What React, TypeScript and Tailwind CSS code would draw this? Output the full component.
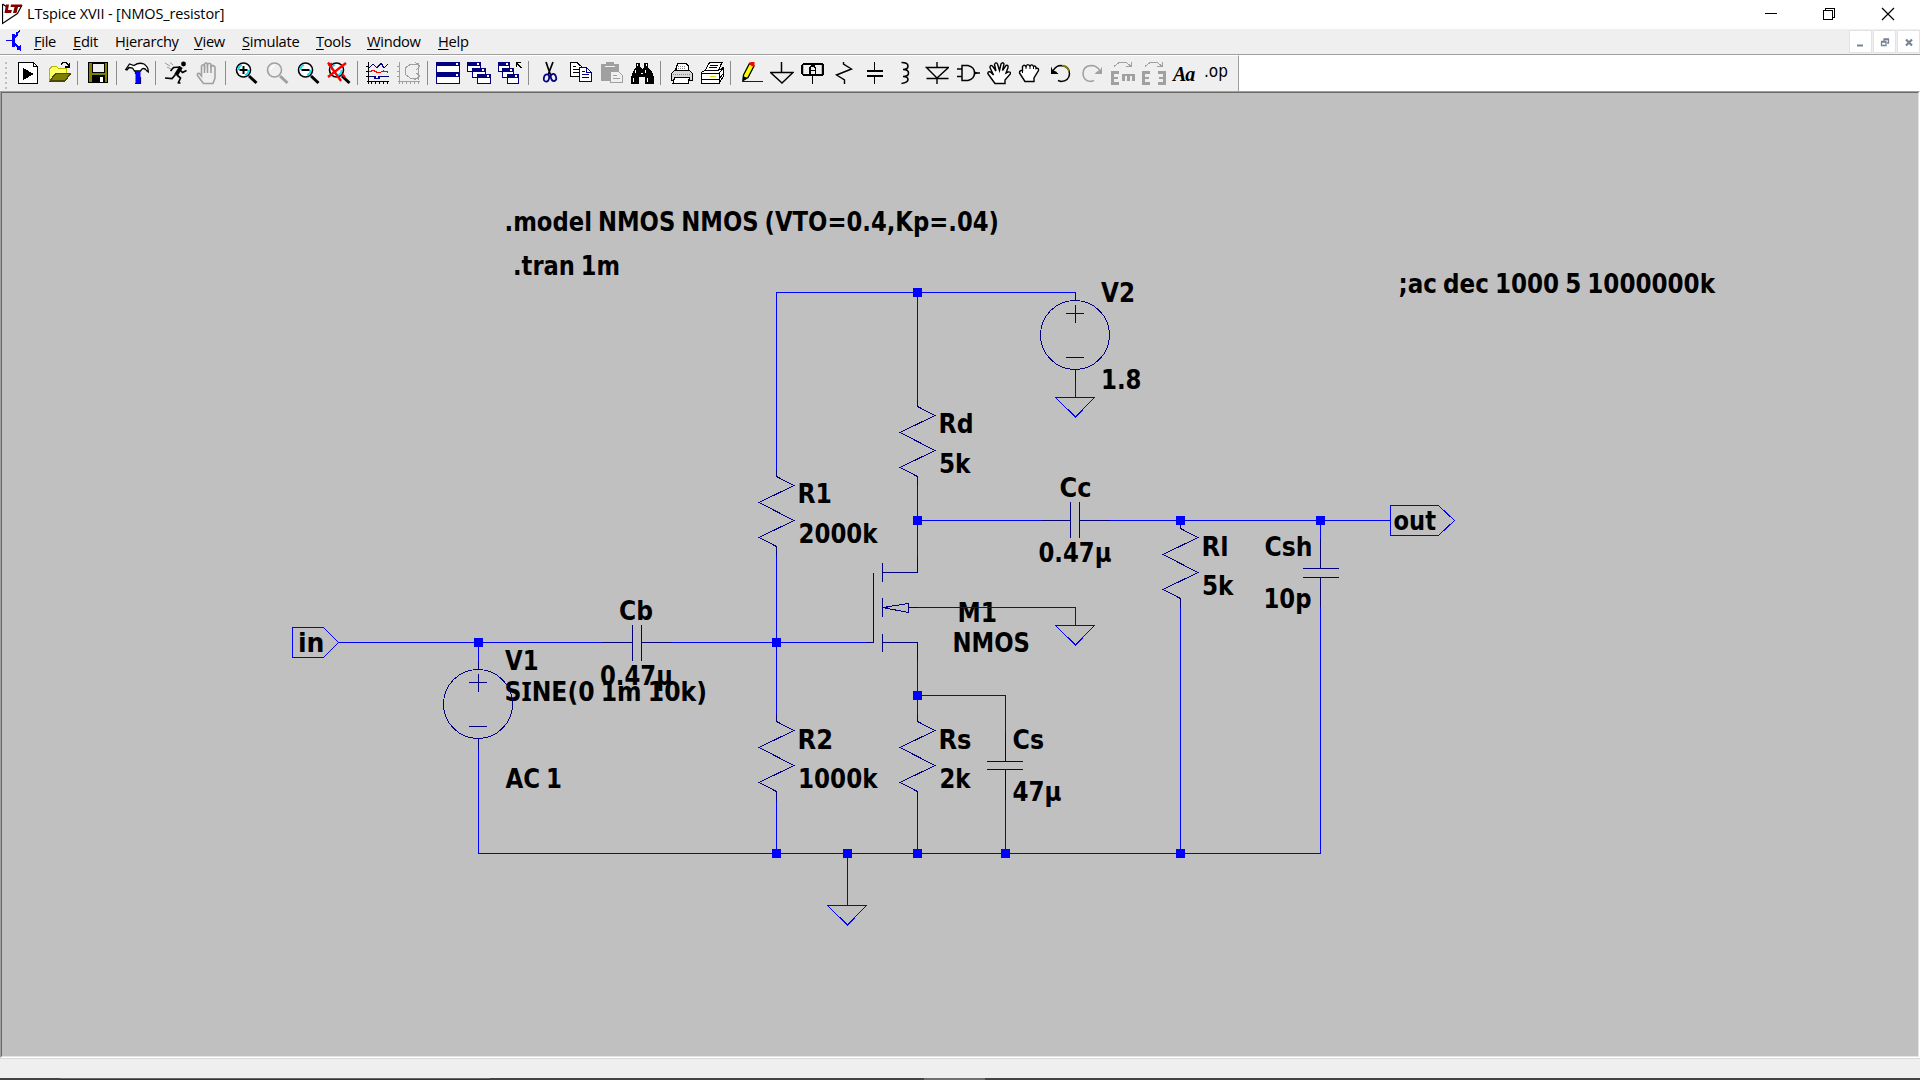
import React from "react";

const NAVY = "#000080";
const BLUE = "#0000ff";

type IconProps = { children: React.ReactNode; smooth?: boolean };

function Icon({ children, smooth }: IconProps) {
  return (
    <svg
      className="w-6 h-6 shrink-0"
      viewBox="0 0 24 24"
      fill="none"
      stroke="#000"
      strokeWidth={1.3}
      shapeRendering={smooth ? "auto" : "crispEdges"}
    >
      {children}
    </svg>
  );
}

function Lens({ gray, children }: { gray?: boolean; children?: React.ReactNode }) {
  const c = gray ? "#a0a0a0" : "#000";
  return (
    <Icon smooth>
      <circle cx="9.5" cy="9" r="7" fill={gray ? "none" : "#fff"} stroke={c} strokeWidth="1.6" />
      {gray ? (
        <path d="M6 9Q6 5.500 9.500 5" stroke="#fff" />
      ) : (
        <path d="M4.500 9Q4.500 5 8 4M14.500 9Q14.500 13 11 14" stroke="#00e5ff" strokeWidth="1.8" />
      )}
      <path d="M15 15L22.500 22" stroke={c} strokeWidth="3" />
      {children}
    </Icon>
  );
}

const MiniWindow = ({ x, y, w = 13, h = 9 }: { x: number; y: number; w?: number; h?: number }) => (
  <g>
    <rect x={x + 0.5} y={y + 0.5} width={w} height={h} fill="#fff" stroke={NAVY} strokeWidth="1" />
    <rect x={x} y={y} width={w + 1} height="4" fill={NAVY} stroke="none" />
    <rect x={x + w - 3} y={y + 1} width="2" height="2" fill="#fff" stroke="none" />
  </g>
);

const icons: Record<string, React.ReactNode> = {
  play: (
    <Icon>
      <path d="M2.500 1.500H17.500L21.500 5.500V22.500H2.500Z" fill="#fff" />
      <path d="M17.500 1.500V5.500H21.500" />
      <path d="M7 7L18 13L7 19Z" fill="#000" stroke="none" />
    </Icon>
  ),
  open: (
    <Icon>
      <path d="M2.500 20V8L5 5.500H9.500L11.500 7.500H19.500V12" fill="#ffff66" stroke="#b8b800" />
      <path d="M3 20L8.500 12.500H23.500L18 20Z" fill="#808000" stroke="#4a4a00" />
      <path d="M14 3.500L16 1.500H19L22.500 5.500M22.500 1.500V6H18" />
    </Icon>
  ),
  save: (
    <Icon>
      <rect x="2.500" y="1.500" width="19" height="20" fill="#808000" />
      <rect x="6" y="2" width="12" height="9" fill="#efefef" stroke="#000" strokeWidth="1" />
      <rect x="6" y="14" width="13" height="7" fill="#000" stroke="none" />
      <rect x="14" y="16" width="3" height="5" fill="#fff" stroke="none" />
    </Icon>
  ),
  hammer: (
    <Icon smooth>
      <path d="M.7 8.500L4.500 3L9 4.500Q14 1 19 3Q23.500 6 23.300 11L21.500 9.500Q19.500 6.500 17 8L15.500 10H9.500L7.500 7L4 6.500L2 9Z" fill="#fff" />
      <path d="M13 10V22.500" stroke={BLUE} strokeWidth="5" />
      <path d="M10.500 10V13M15.500 16V22.500M10 22.500H16" stroke={NAVY} strokeWidth="1.200" />
    </Icon>
  ),
  run: (
    <Icon smooth>
      <circle cx="19.500" cy="3" r="2.400" fill="#000" stroke="none" />
      <path d="M17 6L12 14" strokeWidth="4" />
      <path d="M16.500 6L9.500 6.500L6.500 10M16 9L18.500 11.500L22.500 9.500M13 14L16.500 17L14 22.500M11.500 13.500L8 17.500L1 17M14 22H16.500" strokeWidth="1.700" />
      <path d="M1 2L6 5M3 6L7 8M6 1.500L9 4" stroke="#999" strokeWidth="1" />
    </Icon>
  ),
  halt: (
    <Icon smooth>
      <path d="M8.500 22.500L2.500 14.500Q1.500 12 4.500 12.500L6.500 15V5Q8 2.500 9.500 5V3Q11 .5 12.500 3V3.500Q14.500 1 16 3.500V5.500Q18 3.500 20 6V17L18 22.500Z" fill="#efefef" stroke="#a0a0a0" strokeWidth="1.600" />
      <path d="M9.500 5V12M12.500 3V12M16 4V12" stroke="#a0a0a0" strokeWidth="1.600" />
    </Icon>
  ),
  zoomIn: (
    <Lens>
      <path d="M5.500 9H13.500M9.500 5V13" strokeWidth="2" />
    </Lens>
  ),
  zoomPan: <Lens gray />,
  zoomOut: (
    <Lens>
      <path d="M5.500 9H13.500" strokeWidth="2" />
    </Lens>
  ),
  zoomFit: (
    <Lens>
      <path d="M1 1.500L14 20M19 2L1 16M1 4L5 2.500M15 13L18 16" stroke="#ff0000" strokeWidth="2.300" />
    </Lens>
  ),
  plot: (
    <Icon>
      <path d="M2.500 1V23M1 20.500H23M5.500 20V23M9.500 20V23M13.500 20V23M17.500 20V23M21.500 20V23M0 5.500H3M0 10.500H3M0 15.500H3" />
      <path d="M3 7L7 3L11 7L15 2L18 7L22 3" stroke={NAVY} />
      <path d="M3 11L7 9.500L13 12L17 10L22 11" stroke="#ff0000" />
      <path d="M3 15.500H9V17.500H13V15.500H23" stroke={NAVY} />
    </Icon>
  ),
  smith: (
    <Icon>
      <path d="M2.500 1V23M1 20.500H23M5.500 20V23M9.500 20V23M13.500 20V23M17.500 20V23M21.500 20V23M0 5.500H3M0 10.500H3M0 15.500H3" stroke="#a0a0a0" />
      <path d="M20 3H14L8 7V13L13 17H21M18 1L23 5L19 9M19 12L23 15L17 19M21.500 2V19" stroke="#a0a0a0" strokeWidth="1" />
    </Icon>
  ),
  tile: (
    <Icon>
      <MiniWindow x={0} y={1} w={23} h={10} />
      <MiniWindow x={0} y={12} w={23} h={10} />
    </Icon>
  ),
  cascade: (
    <Icon>
      <MiniWindow x={0} y={1} />
      <MiniWindow x={5} y={7} />
      <MiniWindow x={10} y={13} />
    </Icon>
  ),
  closeAll: (
    <Icon>
      <MiniWindow x={0} y={1} w={11} />
      <MiniWindow x={4} y={7} w={11} />
      <MiniWindow x={9} y={13} w={11} />
      <path d="M18.500 6V1.500H23M18.500 1.500L23 7" strokeWidth="1.600" />
    </Icon>
  ),
  cut: (
    <Icon smooth>
      <path d="M9 1L13.500 14M16 1L11 14" strokeWidth="1.700" />
      <ellipse cx="9.500" cy="17" rx="2.600" ry="3.600" stroke={NAVY} strokeWidth="1.700" transform="rotate(15 9.500 17)" />
      <ellipse cx="16.500" cy="16.500" rx="2.600" ry="3.600" stroke={NAVY} strokeWidth="1.700" transform="rotate(-20 16.500 16.500)" />
    </Icon>
  ),
  copy: (
    <Icon>
      <path d="M2.500 1.500H9L13.500 5.500V15.500H2.500Z" fill="#fff" />
      <path d="M5 5.500H8M5 8.500H11M5 11.500H11" strokeWidth="1" />
      <path d="M11.500 6.500H18.500L23.500 11.500V20.500H11.500Z" fill="#fff" stroke={NAVY} />
      <path d="M14 10.500H17M14 13.500H21M14 16.500H21M18.500 7V11.500H23" stroke={NAVY} strokeWidth="1" />
    </Icon>
  ),
  paste: (
    <Icon>
      <rect x="2" y="3" width="18" height="17" rx="1" fill="#a0a0a0" stroke="none" />
      <rect x="7" y="1" width="8" height="3" fill="#a0a0a0" stroke="none" />
      <path d="M6 5.500H16" stroke="#efefef" strokeWidth="1" />
      <path d="M11.500 10.500H19.500L23.500 14.500V21.500H11.500Z" fill="#efefef" stroke="#a0a0a0" />
      <path d="M14 14.500H18M14 17.500H21" stroke="#a0a0a0" strokeWidth="1" />
    </Icon>
  ),
  find: (
    <Icon>
      <path d="M6 2H10V6L12 8L14 6V2H18V6L22 11L24 16V23H15V16H9V23H1V16L3 11L6 6Z" fill="#000" stroke="none" />
      <path d="M7.500 3V5M16.500 3V5M5.500 9V12M15.500 9V12M3.500 17V21M17.500 17V21M11 12.500H13" stroke="#fff" strokeWidth="1.300" />
    </Icon>
  ),
  print: (
    <Icon>
      <path d="M6.500 10L8.500 2.500H17L19.500 5.500V10" fill="#fff" />
      <path d="M2.500 12.500L5.500 9.500H20.500L23.500 12.500V19.500H2.500Z" fill="#d8d8d8" />
      <path d="M5.500 16.500H20.500L19 22.500H4Z" fill="#fff" />
      <path d="M9 5.500H16M9 7.500H17M4 13.500H22" stroke="#888" strokeWidth="1" strokeDasharray="1 1" />
    </Icon>
  ),
  printSetup: (
    <Icon>
      <path d="M5 10L9.500 1.500H22L18 10" fill="#fff" strokeWidth="1" />
      <path d="M1.500 11.500L5 9.500H18L23.500 6.500V15L19 22.500H1.500Z" fill="#fff" strokeWidth="1" />
      <path d="M1.500 12.500H19V22M19 12L23.500 7M1.500 18.500H19L23.500 12M10 4.500H18M9 6.500H17" strokeWidth="1" />
      <path d="M10 15.500H16" stroke="#e0d800" strokeWidth="1.500" />
    </Icon>
  ),
  pencil: (
    <Icon smooth>
      <path d="M4.500 14L10.500 2.500L15 5L9 16.500L4 19.500Z" fill="#ffff00" />
      <path d="M10 3L11.500 1H15.500V5L14.500 6Z" fill="#ff0000" stroke="none" />
      <path d="M4 15L8.500 17L3.500 20Z" fill="#000" stroke="none" />
      <path d="M3 20.500H24" stroke={BLUE} strokeWidth="1" shapeRendering="crispEdges" />
    </Icon>
  ),
  ground: (
    <Icon smooth>
      <path d="M11.500 1V11.500M.5 11.500H23L12 22Z" strokeWidth="1.500" />
    </Icon>
  ),
  label: (
    <Icon>
      <rect x="1" y="3" width="21" height="11" rx="2" fill="#efefef" strokeWidth="1.800" />
      <path d="M2.500 4V13M20.500 4V13" stroke="#c8c070" strokeWidth="1" />
      <path d="M9 12.500V7L10.500 5H13L14.500 7V12.500M9 9.500H14.500" strokeWidth="1.500" />
      <path d="M11.500 14V23" />
    </Icon>
  ),
  resistor: (
    <Icon smooth>
      <path d="M11.500 1V3L19.500 8L4.500 14L12.500 19V23" strokeWidth="1.400" />
    </Icon>
  ),
  capacitor: (
    <Icon>
      <path d="M11.500 1V9M11.500 15V23" strokeWidth="1" />
      <path d="M4 10H20M4 15H20" strokeWidth="2" />
    </Icon>
  ),
  inductor: (
    <Icon smooth>
      <path d="M7.500 1.500Q14 1.500 14 5T9 8.500Q14.500 8.500 14.500 12T9 15.500Q14 15.500 14 18.500T7.500 22.500" strokeWidth="1.600" />
    </Icon>
  ),
  diode: (
    <Icon smooth>
      <path d="M12 1V6.500M1.500 6.500H23.500L12 17Z M1.500 17.500H23.500M12 17V23" strokeWidth="1.400" />
    </Icon>
  ),
  component: (
    <Icon smooth>
      <path d="M6 4.500H12Q18.500 6 18.500 12T12 19.500H6Z" strokeWidth="1.500" />
      <path d="M1 8H6M1 15.500H6M19 12H24" strokeWidth="1.400" />
      <path d="M18 10V14L22 12Z" fill="#000" stroke="none" />
    </Icon>
  ),
  move: (
    <Icon smooth>
      <path d="M8 22.500Q4 17 .8 12.500Q1 10 3.500 11L6.500 14L3 6.500Q3 3.500 5.500 5L9 10L7.500 3.500Q9 .5 10.500 3L12.500 9.500L14 3Q16 .5 17 3L15.500 9.500L19 4.500Q21.500 3.500 21 6.500L19 12L21 11Q24 10.500 23.300 13L18 19V22.500Z" fill="#fff" strokeWidth="1.400" />
    </Icon>
  ),
  drag: (
    <Icon smooth>
      <path d="M7 20.500L1.500 12Q1.500 9 4.500 9.500V5.500Q6 3 8 5.500Q9.500 2 12 5Q14 2.500 15.500 5.500Q18 4 18 7.500Q21 6.500 20.500 9.500L16 17V20.500Z" fill="#fff" strokeWidth="1.400" />
      <path d="M4.500 9V12M8 5.500V8M12 5V8M15.500 5.500V8" strokeWidth="1" />
    </Icon>
  ),
  undo: (
    <Icon smooth>
      <path d="M4 10Q7 4.500 12 4.500Q20.500 5 20.500 13Q20 20 12 20.500L9 19.500" strokeWidth="1.500" />
      <path d="M13 4.500Q19 5.500 20 10" stroke="#808000" strokeWidth="1.500" />
      <path d="M2 5.500V13H9.500L7 10.500L4 9.500Z" fill="#000" stroke="none" />
    </Icon>
  ),
  redo: (
    <Icon smooth>
      <path d="M20 10Q17 4.500 11 4.500Q3 5 3 13Q3.500 20 11 20.500L14 19.500" stroke="#a0a0a0" strokeWidth="1.600" />
      <path d="M22 5.500V13H14.500L17 10.500L20 9.500Z" fill="#a0a0a0" stroke="none" />
    </Icon>
  ),
  rotate: (
    <Icon>
      <path d="M8 11.500H1.500V22.500H8M1.500 17H7" stroke="#a0a0a0" strokeWidth="2.600" />
      <path d="M11 14H24M12.500 14V20M17.500 13V20M22.500 13V20" stroke="#a0a0a0" strokeWidth="2.600" />
      <path d="M3 5.500L8 1.500H15L20 5M20.500 1V5.500H15" stroke="#a0a0a0" strokeWidth="1" />
    </Icon>
  ),
  mirror: (
    <Icon>
      <path d="M8 11.500H1.500V22.500H8M1.500 17H7" stroke="#a0a0a0" strokeWidth="2.600" />
      <path d="M16 11.500H22.500V22.500H16M17 17H22.500" stroke="#a0a0a0" strokeWidth="2.600" />
      <path d="M3 5.500L8 1.500H15L20 5M20.500 1V5.500H15" stroke="#a0a0a0" strokeWidth="1" />
    </Icon>
  ),
  text: (
    <span className="block w-6 h-6 whitespace-nowrap font-['Liberation_Serif',serif] font-bold italic text-[20px] leading-[26px] tracking-[-1px]">
      Aa
    </span>
  ),
  op: (
    <span className="block w-6 h-6 whitespace-nowrap font-['DejaVu_Sans_Condensed','DejaVu_Sans',sans-serif] text-[17px] leading-[21px]">
      .op
    </span>
  ),
};

const toolbarGroups: string[][] = [
  ["play", "open"],
  ["save"],
  ["hammer"],
  ["run", "halt"],
  ["zoomIn", "zoomPan", "zoomOut", "zoomFit"],
  ["plot", "smith"],
  ["tile", "cascade", "closeAll"],
  ["cut", "copy", "paste", "find"],
  ["print", "printSetup"],
  ["pencil", "ground", "label", "resistor", "capacitor", "inductor", "diode", "component", "move", "drag", "undo", "redo", "rotate", "mirror", "text", "op"],
];

function Toolbar() {
  return (
    <div className="flex h-[36px] bg-white">
      <div className="flex w-[1239px] border-t border-t-white border-r border-r-[#a0a0a0] bg-[#efefef] pt-[5px]">
        <div className="ml-[5px] mr-[6px] flex w-[2px] flex-col gap-[3px] pt-px">
          {Array.from({ length: 6 }, (_, i) => (
            <span key={i} className="h-[2px] w-[2px] shrink-0 bg-[#bdbdbd]" />
          ))}
        </div>
        {toolbarGroups.map((group, g) => (
          <React.Fragment key={g}>
            {g > 0 && (
              <div className="w-2 shrink-0 pl-[2px]">
                <div className="h-6 w-px bg-[#8c8c8c]" />
              </div>
            )}
            {group.map((name) => (
              <button key={name} className="block h-6 w-[31px] shrink-0 pl-[3px] text-left text-black">
                {icons[name]}
              </button>
            ))}
          </React.Fragment>
        ))}
      </div>
    </div>
  );
}

function TitleBar() {
  return (
    <div className="flex h-[29px] items-start bg-white">
      <svg className="mt-[3px] ml-[2px] h-[22px] w-[21px]" viewBox="0 0 21 22" fill="none">
        <path d="M.5 1V20.500L15.500 10.500M15.500 10.500L20 2M.5 1L5 4" stroke="#000" strokeWidth="1.200" />
        <path d="M4 1.500H7L6 7H10L9 10H2.500ZM9 1.500H20L19 4H16L14.500 10H11L12.500 4H8.500Z" fill="#800000" />
      </svg>
      <span className="ml-[4px] w-[300px] whitespace-nowrap text-[14.5px] leading-[28px] tracking-[-0.14px]">LTspice XVII - [NMOS_resistor]</span>
      <svg className="ml-auto mt-[7px] h-[15px] w-[155px]" viewBox="1765 7 155 15" fill="none" stroke="#000" shapeRendering="crispEdges">
        <path d="M1765 13.500H1777" />
        <path d="M1823.500 10.500H1832.500V19.500H1823.500ZM1825.500 10V8.500H1834.500V17.500H1833" />
        <path d="M1882 8L1894 20M1894 8L1882 20" shapeRendering="auto" strokeWidth="1.200" />
      </svg>
    </div>
  );
}

const menus: { label: string; key: number; cell: string }[] = [
  { label: "File", key: 0, cell: "w-[39px]" },
  { label: "Edit", key: 0, cell: "w-[42px]" },
  { label: "Hierarchy", key: 1, cell: "w-[79px]" },
  { label: "View", key: 0, cell: "w-[48px]" },
  { label: "Simulate", key: 0, cell: "w-[74px]" },
  { label: "Tools", key: 0, cell: "w-[51px]" },
  { label: "Window", key: 0, cell: "w-[71px]" },
  { label: "Help", key: 0, cell: "w-[48px]" },
];

function MenuBar() {
  return (
    <div className="flex h-[26px] border-b border-b-[#a0a0a0] bg-[#efefef]">
      <svg className="ml-[6px] mt-px h-[22px] w-[16px]" viewBox="0 0 16 22" fill="none" stroke={BLUE} shapeRendering="crispEdges">
        <path d="M0 10.500H6" strokeWidth="1.400" />
        <path d="M7 4V17" strokeWidth="3" />
        <path d="M8 8L11 5V3L14 .5M8 13L15 20" strokeWidth="1.600" />
        <path d="M10 19L15 21V15Z" fill={BLUE} stroke="none" />
      </svg>
      <nav className="ml-[12px] flex text-[14.7px] leading-[25px] tracking-[-0.3px]">
        {menus.map(({ label, key, cell }) => (
          <span key={label} className={`${cell} whitespace-nowrap`}>
            {label.slice(0, key)}
            <span className="underline decoration-1 underline-offset-2">{label[key]}</span>
            {label.slice(key + 1)}
          </span>
        ))}
      </nav>
      <div className="ml-auto flex h-[24px] gap-px pt-px">
        {[
          <path key="a" d="M8 15.500H14" strokeWidth="2" />,
          <path key="b" d="M8.500 12H13V15.500H8.500ZM11 11V9.500H15.500V13H14M8 11.500H13.500M10.500 9H16" strokeWidth="1.300" />,
          <path key="c" d="M9 9.500L15 15.500M15 9.500L9 15.500" strokeWidth="2.200" />,
        ].map((d, i) => (
          <div key={i} className="h-[23px] w-[23px] border border-[#e3e3e3] bg-white">
            <svg className="h-[21px] w-[21px]" viewBox="1 1 21 21" fill="none" stroke="#758494">
              {d}
            </svg>
          </div>
        ))}
      </div>
    </div>
  );
}

function Resistor({ x, y, lead = 8 }: { x: number; y: number; lead?: number }) {
  return (
    <polyline
      points={`${x},${y - lead} ${x},${y} ${x + 17.5},${y + 9} ${x - 17.5},${y + 26} ${x + 17.5},${y + 44} ${x - 17.5},${y + 61} ${x},${y + 70} ${x},${y + 79}`}
    />
  );
}

function Source({ x, y }: { x: number; y: number }) {
  return (
    <g>
      <circle cx={x - 0.5} cy={y + 34.5} r="34.5" />
      <path d={`M${x} ${y - 8}V${y}M${x - 9.5} ${y + 13}H${x + 8.5}M${x} ${y + 4}V${y + 22}M${x - 9.5} ${y + 57}H${x + 8.5}M${x} ${y + 69}V${y + 79}`} />
    </g>
  );
}

const Ground = ({ x, y }: { x: number; y: number }) => <path d={`M${x - 20} ${y}H${x + 19}L${x} ${y + 19.5}Z`} />;

const junctions: [number, number][] = [
  [917, 292], [917, 520], [1180, 520], [1320, 520], [478, 642], [776, 642], [917, 695],
  [776, 853], [847, 853], [917, 853], [1005, 853], [1180, 853],
];

/* text, left, baseline, advance width */
const labels: [string, number, number, number][] = [
  [".model NMOS NMOS (VTO=0.4,Kp=.04)", 504.5, 231, 494.5],
  [".tran 1m", 513, 275, 107],
  [";ac dec 1000 5 1000000k", 1398.500, 293, 316.5],
  ["V2", 1101, 302, 34],
  ["1.8", 1101, 389, 40.5],
  ["Rd", 938.5, 433, 35],
  ["5k", 939, 473, 31.5],
  ["R1", 797.5, 503, 34.5],
  ["2000k", 798.5, 543, 79],
  ["Cc", 1059.5, 497, 32],
  ["0.47µ", 1038.5, 562, 73],
  ["M1", 957.5, 622, 39.5],
  ["NMOS", 952.5, 652, 77.5],
  ["R2", 797.5, 749, 35.5],
  ["1000k", 798, 788, 79.5],
  ["Rs", 938.5, 749, 33],
  ["2k", 939.5, 788, 31],
  ["Cs", 1012.5, 749, 31.5],
  ["47µ", 1012.5, 801, 49],
  ["in", 298, 652, 26.5],
  ["V1", 505, 670, 33.5],
  ["SINE(0 1m 10k)", 504.5, 701, 202.5],
  ["AC 1", 505.5, 788, 56.5],
  ["Cb", 619, 620, 34],
  ["0.47µ", 600, 685, 73],
  ["Rl", 1201.5, 556, 27],
  ["5k", 1202, 595, 31.5],
  ["Csh", 1264.5, 556, 48],
  ["10p", 1263.5, 608, 48],
  ["out", 1393.5, 530, 42.5],
];

function Schematic() {
  return (
    <svg className="block h-[963px] w-[1916px] bg-[#c0c0c0]" viewBox="2 93 1916 963">
      <g fill="#000" className="font-['DejaVu_Sans_Condensed','DejaVu_Sans',sans-serif] font-bold text-[26px] [word-spacing:-2px]">
        {labels.map(([t, x, y, w], i) => (
          <text key={i} x={x} y={y} textLength={w} lengthAdjust="spacingAndGlyphs" xmlSpace="preserve">
            {t.split("I").map((part, n) => (
              <React.Fragment key={n}>
                {n > 0 && <tspan className="font-['Noto_Sans',sans-serif]">I</tspan>}
                {part}
              </React.Fragment>
            ))}
          </text>
        ))}
      </g>
      <g transform="translate(.5 .5)" fill="none" strokeWidth="1" shapeRendering="crispEdges">
        <g stroke={BLUE}>
          <path d="M776 468V292H1075V296M917 292V398M1075 379V397M776 555V713M776 800V853" />
          <path d="M917 485V555M917 520H1041M1109 520H1390M1180 606V853M1320 520V538M1320 606V853" />
          <path d="M338 642H601M671 642H865M478 642V661M478 747V853H1320M847 853V905" />
          <path d="M917 607H1075V625M917 660V713M917 695H1005V731M1005 799V853M917 800V853" />
          <path d="M292 627H323L338 642L323 657H292ZM1390 505H1438L1454 520L1438 535H1390Z" />
          <Ground x={1075} y={397} />
          <Ground x={1075} y={625} />
          <Ground x={847} y={905} />
        </g>
        <g stroke={NAVY}>
          <Resistor x={776} y={476} />
          <Resistor x={917} y={406} />
          <Resistor x={776} y={721} />
          <Resistor x={917} y={721} />
          <Resistor x={1180} y={528} />
          <Source x={1075} y={300} />
          <Source x={478} y={669} />
          <path d="M1041 520H1070M1070 501.500V537.500M1079 501.500V537.500M1079 520H1109" />
          <path d="M601 642H632M632 624.500V660.500M641 624.500V660.500M641 642H671" />
          <path d="M1005 731V761M986.500 761H1022.500M986.500 769H1022.500M1005 769V799" />
          <path d="M1320 538V568M1302.500 568H1338.500M1302.500 577H1338.500M1320 577V606" />
          <path d="M917 555V572H882M882 562.500V581.500M882 597.500V616.500M882 633.500V651.500M882 642H917V660M865 642H873V572" />
          <path d="M882 607L908 603V612ZM882 607H887M908 607H917" />
        </g>
        <g fill={BLUE} stroke="none" transform="translate(-.5 -.5)">
          {junctions.map(([x, y]) => (
            <rect key={`${x}-${y}`} x={x - 4} y={y - 4} width="9" height="9" />
          ))}
        </g>
      </g>
    </svg>
  );
}

export default function App() {
  return (
    <div className="flex h-[1080px] w-[1920px] flex-col overflow-hidden bg-[#efefef] font-['Open_Sans','Noto_Sans',sans-serif] text-black">
      <TitleBar />
      <MenuBar />
      <Toolbar />
      <main className="h-[967px] w-[1920px] border border-t-[#a0a0a0] border-l-[#a0a0a0] border-r-white border-b-white">
        <div className="h-[965px] w-[1918px] border border-t-[#696969] border-l-[#696969] border-r-[#e3e3e3] border-b-[#e3e3e3]">
          <Schematic />
        </div>
      </main>
      <footer className="flex h-[20px] border-t border-t-[#d9d9d9] bg-[#efefef]" />
      <div className="flex h-[2px] bg-[#444444]">
        <div className="ml-[60px] h-[2px] w-[430px] border-t border-t-[#666] bg-[#333]" />
        <div className="ml-[434px] h-[2px] w-[61px] bg-[#707070]" />
      </div>
    </div>
  );
}
